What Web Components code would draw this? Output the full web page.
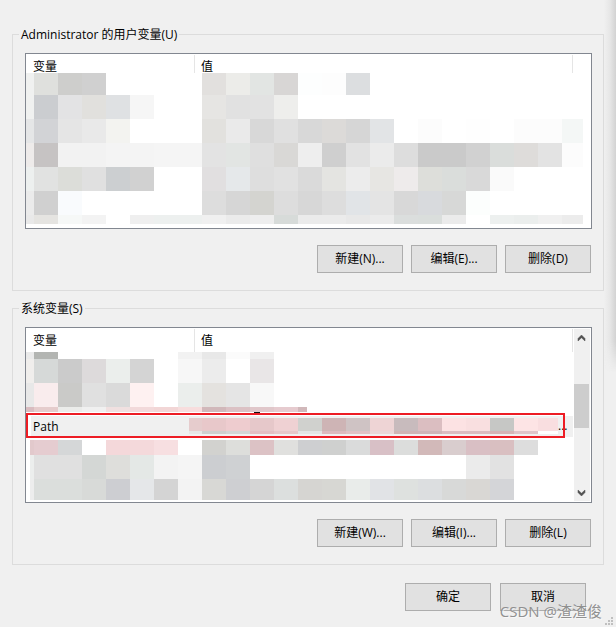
<!DOCTYPE html>
<html lang="zh-CN">
<head>
<meta charset="utf-8">
<title>环境变量</title>
<style>
  html {
    height: 100%;
  }

  body {
    background-color: #f0f0f0;
    color: black;
    font: 12px/16px "Open Sans", "Noto Sans CJK SC", sans-serif;
    margin: 0;
    min-height: 100%;
    position: relative;
  }
</style>
</head>
<body>
<env-dialog></env-dialog>

<script>
// mosaic-row: a strip of coloured 24px blocks, "-" leaves a block empty
class MosaicRow extends HTMLElement {
  constructor(){
    super();
    this.attachShadow({ mode: 'open' });
  }

  connectedCallback() {
    const height = Number(this.getAttribute('height') || 24);
    const first = Number(this.getAttribute('first') || 8);
    const last = Number(this.getAttribute('last') || 24);
    const colors = this.getAttribute('colors').trim().split(/\s+/);
    let x = Number(this.getAttribute('start') || 0);
    let rects = '';
    colors.forEach((color, i) => {
      let width = 24;
      if (i == 0) width = first;
      else if (i == colors.length - 1) width = last;
      if (color != '-') {
        rects += `<rect x="${x}" y="0" width="${width}" height="${height}" fill="#${color}"/>`;
      }
      x += width;
    });
    this.shadowRoot.innerHTML = `
    <style>
      :host {
        display: block;
        overflow: hidden;
      }

      svg {
        display: block;
      }
    </style>
    <svg width="${x}" height="${height}" shape-rendering="crispEdges" aria-hidden="true">${rects}</svg>`;
  }
}

customElements.define('mosaic-row', MosaicRow);


// push-button
class PushButton extends HTMLElement {
  constructor(){
    super();
    this.attachShadow({ mode: 'open' }).innerHTML = `
    <style>
      :host {
        display: block;
      }

      button {
        background-color: #e1e1e1;
        border: 1px solid #adadad;
        box-sizing: border-box;
        color: inherit;
        font: inherit;
        height: 28px;
        padding: 0;
        width: 86px;
      }

      button:hover {
        background-color: #e5f1fb;
        border-color: #0078d7;
      }
    </style>
    <button type="button"><slot></slot></button>`;
  }
}

customElements.define('push-button', PushButton);


// group-box
class GroupBox extends HTMLElement {
  constructor(){
    super();
    this.attachShadow({ mode: 'open' }).innerHTML = `
    <style>
      :host {
        display: block;
      }

      fieldset {
        border: 1px solid #dcdcdc;
        margin: 0;
        min-width: 0;
        padding: 10px 11px 17px 12px;
      }

      legend {
        line-height: 17px;
        margin-left: -6px;
        padding: 0 2px;
      }

      .buttons {
        display: flex;
        gap: 8px;
        justify-content: flex-end;
        margin: 16px 1px 0 0;
      }
    </style>
    <fieldset>
      <legend><slot name="title"></slot></legend>
      <slot></slot>
      <div class="buttons"><slot name="buttons"></slot></div>
    </fieldset>`;
  }
}

customElements.define('group-box', GroupBox);


// scroll-strip
class ScrollStrip extends HTMLElement {
  constructor(){
    super();
    this.attachShadow({ mode: 'open' }).innerHTML = `
    <style>
      :host {
        background-color: #f0f0f0;
        display: flex;
        flex-direction: column;
        width: 16px;
      }

      button {
        background: none;
        border: none;
        height: 17px;
        padding: 0;
        width: 16px;
      }

      svg {
        display: block;
      }

      .track {
        flex: 1;
        padding-top: 38px;
      }

      .thumb {
        background-color: #cdcdcd;
        height: 44px;
        width: 15px;
      }
    </style>
    <button type="button" aria-label="向上滚动">
      <svg width="16" height="17"><path d="M4 9.5 L7.5 6 L11 9.5 V12 L7.5 8.8 L4 12 Z" fill="#505050" stroke="#505050" stroke-width=".5"/></svg>
    </button>
    <div class="track"><div class="thumb"></div></div>
    <button type="button" aria-label="向下滚动">
      <svg width="16" height="17"><path d="M4 8.5 L7.5 12 L11 8.5 V6 L7.5 9.2 L4 6 Z" fill="#505050" stroke="#505050" stroke-width=".5"/></svg>
    </button>`;
  }
}

customElements.define('scroll-strip', ScrollStrip);


// shared rules of both variable lists
const listStyle = `
  :host {
    background-color: white;
    border: 1px solid #828790;
    display: flex;
  }

  table {
    border-collapse: separate;
    border-spacing: 0;
    flex: 1;
    min-width: 0;
    table-layout: fixed;
    width: 100%;
  }

  th, td {
    font-weight: normal;
    padding: 0;
    text-align: left;
  }

  th {
    background: linear-gradient(#e5e5e5, #e5e5e5) right 1px / 1px 100% no-repeat;
    box-sizing: border-box;
    height: 24px;
    line-height: 12px;
    padding: 2px 0 0 7px;
  }

  th:first-child {
    width: 169px;
  }

  th:last-child {
    padding-left: 6px;
  }
`;

class UserVariables extends HTMLElement {
  constructor(){
    super();
    this.attachShadow({ mode: 'open' }).innerHTML = `
    <style>
      ${listStyle}
      :host {
        padding: 0 8px 4px 0;
      }

      th {
        height: 19px;
        padding-top: 7px;
      }

      th:last-child {
        background-position: right 10px top 1px;
      }
    </style>
    <table>
      <thead><tr><th>变量</th><th>值</th></tr></thead>
      <tbody>
        <tr><td colspan="2"><mosaic-row height="22" colors="f0f1f0 dfe0dd cececc d0d0d0 - - - - e2e0de ecece9 e2e5e3 d8d6d5 fdfefe fdfdfd dcdee0"></mosaic-row></td></tr>
        <tr><td colspan="2"><mosaic-row colors="f0f1f0 cbcdd0 e3e3e4 e1e0dd dfe1e3 f6f6f6 - - e6e5e3 e1e1e1 e2e2e2 eeeeec"></mosaic-row></td></tr>
        <tr><td colspan="2"><mosaic-row last="21" colors="e5e6e7 d2d3d6 e5e5e5 e9e9e9 f3f3f0 - - - e2e1de eaeaea d8d8d8 e0e0e0 d8d8d8 dcdad8 d6d6d6 e2e4e6 - fcfcfc - fefefe - fcfcfc fcfcfc f4f7f6"></mosaic-row></td></tr>
        <tr><td colspan="2"><mosaic-row last="21" colors="eeebea c6c3c3 f2f2f2 f2f2f2 f4f4f4 f4f4f4 f5f5f5 f5f5f5 e3e3e3 e2e5e3 dfdfdf d9d8d6 eeeeee cfcfcf e2e2e2 ebebeb dddddd cacaca cacaca d1d1d1 dadddb dedcda e3e3e3 fcfcfc"></mosaic-row></td></tr>
        <tr><td colspan="2"><mosaic-row colors="edf0ef e1e2e1 dcddd9 e0e0e0 cccfd1 d1d1d1 - - e1dfe0 e5e8ea dedede e1e1e1 dadada e4e4e1 ececec e7e6e3 eeebeb dddeda dadddb d9d9d9 fafafa"></mosaic-row></td></tr>
        <tr><td colspan="2"><mosaic-row colors="ebebeb d0d0d0 f9fbfd - - - - - dddddd d6d6d6 d4d4d0 dddddd d7d7d7 dddddd e1e4e7 e4e4e4 d8d8d8 d8dadd d7d8d7 fcfefd"></mosaic-row></td></tr>
        <tr><td colspan="2"><mosaic-row height="9" last="21" colors="e9e9e9 e5e4e1 f6f8f7 f3f3f3 - efefef edf0ef edf0ef f0f0f0 ebebeb eeeeee d7dbd9 ebebeb ebebeb e8e8e8 ebebeb dbdedd dadedc ebebeb - edf0ef ebeeed f0f0f0 ececec"></mosaic-row></td></tr>
      </tbody>
    </table>`;
  }
}

customElements.define('user-variables', UserVariables);

class SystemVariables extends HTMLElement {
  constructor(){
    super();
    this.attachShadow({ mode: 'open' }).innerHTML = `
    <style>
      ${listStyle}
      table {
        margin-bottom: 2px;
      }

      scroll-strip {
        flex: none;
        margin: 1px;
      }

      .selected {
        position: relative;
      }

      .selected td {
        background: linear-gradient(#f0f0f0, #f0f0f0) 0 3px / 100% 21px no-repeat;
        box-sizing: border-box;
        height: 25px;
      }

      .selected td:first-child {
        background-position: 5px 3px;
        padding: 2px 0 0 7px;
      }

      /* red frame over the selected row */
      .selected td:last-child::after {
        border: 2px solid #ed1c24;
        box-sizing: border-box;
        content: "";
        inset: 0 8px 0 0;
        pointer-events: none;
        position: absolute;
      }

      .value {
        display: flex;
        height: 16px;
      }

      .blocks {
        margin-left: -6px;
      }

      .gap td {
        height: 2px;
      }
    </style>
    <table>
      <thead><tr><th>变量</th><th>值</th></tr></thead>
      <tbody>
        <tr><td colspan="2"><mosaic-row height="7" colors="eaeaea b3b5b2 - - - - - f2f2f2 e8e8e8 fbfbfb f0f0f0"></mosaic-row></td></tr>
        <tr><td colspan="2"><mosaic-row colors="f0eeec d6d9d8 cbcbcb dddadb ebeeec d4d4d4 - f7f7f7 ececec - e9e6e7"></mosaic-row></td></tr>
        <tr><td colspan="2"><mosaic-row colors="e8e8e8 f9eced cacac8 e0e0e0 dadada fef1f1 - ebeeec e4e2df e5e5e5 f8f8f8"></mosaic-row></td></tr>
        <tr><td colspan="2"><mosaic-row height="5" last="9" colors="d9bcc0 e5cccc ebecea f0f0f0 f0e0e0 f2d9da f2d6d6 f7dddd d1b8ba dbc1c4 e0c7ca e6cbcf d1b8ba"></mosaic-row></td></tr>
        <tr><td colspan="2"><mosaic-row height="1" start="228" first="6" colors="101010"></mosaic-row></td></tr>
        <tr class="selected">
          <td>Path</td>
          <td>
            <div class="value">
              <div class="blocks">
                <mosaic-row height="13" first="13" last="20" colors="e6cccd e8c8ca eecccf e6c8ca efd1d3 d0d1ce ceb4b5 cfc3c4 eed4d5 c8bbbd dbbec1 fce2e3 f9dfe0 c6c7c5 fde4e5 f9dee0"></mosaic-row>
                <mosaic-row height="3" first="13" last="20" colors="e6e6e6 cfcfcf d4d5d6 e3bfc3 e6c8ca e3e5e5 dcbbbf e0c2c5 ead8d9 cfb5b5 cfb5b8 dbbcc1 dbbcc0 d5b5b7 dfc5ca ffffff"></mosaic-row>
              </div>
              <span>...</span>
            </div>
          </td>
        </tr>
        <tr class="gap"><td colspan="2"></td></tr>
        <tr><td colspan="2"><mosaic-row height="15" start="4" first="4" colors="e2c9cc e5ccd0 d5d7d8 - f4d8da f4d9db f7dfe1 - d2d2cf dddedb dcc2c5 e0e0de cecfd1 cfd0cf dadbdb d8c0c6 dcdddc d2b9b9 d9cdce d9bfc4 d9bfc1 dddddd"></mosaic-row></td></tr>
        <tr><td colspan="2"><mosaic-row start="4" first="4" colors="eceeed e0e0e0 e0e0e0 d4d7d5 dededb e4e8e6 f3f3f3 f5f5f5 ccced1 cfd1d3 - - - - - - - - - ebebeb e2e2e2"></mosaic-row></td></tr>
        <tr><td colspan="2"><mosaic-row height="21" start="4" first="4" colors="ededed dbdedc dbdedc d8dad8 cdced2 e5e7e9 d4d4d4 f3f3f3 d8d8d5 cecfd2 d5d5d5 dcdfde d6d5d2 d7d7d3 e9ecea e1e3e6 dee1df dcdee0 d8d9d8 d9d7d4 d4d5d8"></mosaic-row></td></tr>
      </tbody>
    </table>
    <scroll-strip></scroll-strip>`;
  }
}

customElements.define('system-variables', SystemVariables);


// env-dialog
class EnvDialog extends HTMLElement {
  constructor(){
    super();
    this.attachShadow({ mode: 'open' }).innerHTML = `
    <style>
      :host {
        display: block;
        padding: 26px 12px 16px;
      }

      group-box {
        margin-bottom: 9px;
      }

      .footer {
        display: flex;
        gap: 9px;
        justify-content: flex-end;
        padding: 9px 18px 0 0;
      }

      /* shadow of the window on the right */
      .shade {
        background: linear-gradient(to right, transparent, #e6e6e6 50%, #d2d2d2);
        height: 372px;
        -webkit-mask-image: linear-gradient(to top, transparent, black 30px);
        mask-image: linear-gradient(to top, transparent, black 30px);
        position: absolute;
        right: 0;
        top: 0;
        width: 12px;
      }

      .mark {
        bottom: 6px;
        color: #909090;
        font-size: 15px;
        line-height: 20px;
        position: absolute;
        right: 14px;
        text-shadow: 1px 1px 0 rgb(255,255,255,0.6);
      }

      .grip {
        bottom: 2px;
        position: absolute;
        right: 3px;
      }
    </style>
    <group-box>
      <span slot="title">Administrator 的用户变量(U)</span>
      <user-variables></user-variables>
      <push-button slot="buttons">新建(N)...</push-button>
      <push-button slot="buttons">编辑(E)...</push-button>
      <push-button slot="buttons">删除(D)</push-button>
    </group-box>
    <group-box>
      <span slot="title">系统变量(S)</span>
      <system-variables></system-variables>
      <push-button slot="buttons">新建(W)...</push-button>
      <push-button slot="buttons">编辑(I)...</push-button>
      <push-button slot="buttons">删除(L)</push-button>
    </group-box>
    <div class="footer">
      <push-button>确定</push-button>
      <push-button>取消</push-button>
    </div>
    <div class="shade"></div>
    <div class="mark">CSDN @渣渣俊</div>
    <svg class="grip" width="8" height="8" fill="#bfbfbf" aria-hidden="true">
      <rect x="6" y="0" width="2" height="2"/>
      <rect x="3" y="3" width="2" height="2"/><rect x="6" y="3" width="2" height="2"/>
      <rect x="0" y="6" width="2" height="2"/><rect x="3" y="6" width="2" height="2"/><rect x="6" y="6" width="2" height="2"/>
    </svg>`;
  }
}

customElements.define('env-dialog', EnvDialog);
</script>
</body>
</html>
